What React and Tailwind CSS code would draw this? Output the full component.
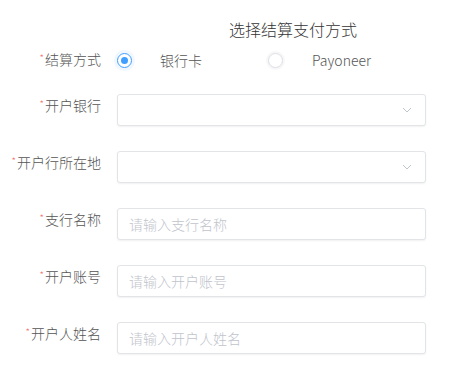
import React from "react";

const font = { fontFamily: '"Noto Sans CJK SC", "Noto Sans", sans-serif' };

function Label({ children, center }) {
  return (
    <div className={`w-[101px] shrink-0 text-right text-[14px] font-light leading-[22px] text-[#555] ${center ? "self-center" : "self-start"}`}>
      <span className="relative -top-[3px] mr-[1px] text-[10px] text-[#f56c6c]">*</span>
      {children}
    </div>
  );
}

function Chevron() {
  return (
    <svg width="10" height="6" viewBox="0 0 10 6" fill="none" className="mr-[13px]">
      <path d="M1 1l4 4 4-4" stroke="#c0c4cc" strokeWidth="1" />
    </svg>
  );
}

function SelectBox() {
  return (
    <div className="ml-[16px] flex h-[32px] w-[309px] items-center justify-end rounded-[3px] border border-[#e2e4e8] bg-white shadow-[0_1px_2px_rgba(0,0,0,0.06)]">
      <Chevron />
    </div>
  );
}

function InputBox({ placeholder }) {
  return (
    <div className="ml-[16px] flex h-[32px] w-[309px] items-center rounded-[3px] border border-[#e2e4e8] bg-white pl-[11px] text-[14px] font-light text-[#c0c4cc] shadow-[0_1px_2px_rgba(0,0,0,0.06)]">
      {placeholder}
    </div>
  );
}

export default function App() {
  return (
    <div className="h-[371px] w-[463px] bg-white" style={font}>
      <div className="pt-[17px] pl-[229px] text-[16px] font-light leading-[24px] text-[#333]">选择结算支付方式</div>

      <div className="mt-[3px] flex h-[32px] items-center">
        <Label center>结算方式</Label>
        <div className="ml-[16px] flex items-center">
          <div className="flex w-[151px] items-center">
            <span className="flex h-[15px] w-[15px] items-center justify-center rounded-full border border-[#409eff] bg-white shadow-[0_0_0_3px_rgba(64,158,255,0.08)]">
              <span className="h-[7px] w-[7px] rounded-full bg-[#409eff]" />
            </span>
            <span className="ml-[28px] text-[14px] font-light text-[#555]">银行卡</span>
          </div>
          <div className="flex items-center">
            <span className="h-[15px] w-[15px] rounded-full border border-[#dcdfe6] bg-white shadow-[0_0_0_2px_rgba(0,0,0,0.03)]" />
            <span className="ml-[29px] text-[14px] font-light text-[#555]">Payoneer</span>
          </div>
        </div>
      </div>

      <div className="mt-[18px] flex">
        <Label>开户银行</Label>
        <SelectBox />
      </div>
      <div className="mt-[25px] flex">
        <Label>开户行所在地</Label>
        <SelectBox />
      </div>
      <div className="mt-[25px] flex">
        <Label>支行名称</Label>
        <InputBox placeholder="请输入支行名称" />
      </div>
      <div className="mt-[25px] flex">
        <Label>开户账号</Label>
        <InputBox placeholder="请输入开户账号" />
      </div>
      <div className="mt-[25px] flex">
        <Label>开户人姓名</Label>
        <InputBox placeholder="请输入开户人姓名" />
      </div>
    </div>
  );
}
